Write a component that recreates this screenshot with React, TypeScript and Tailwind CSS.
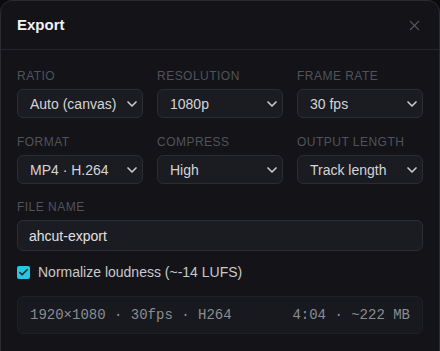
import { ChevronDown, X, Check } from 'lucide-react';

function Field({ label, value }: { label: string; value: string }) {
  return (
    <div className="flex flex-col">
      <span className="text-[12px] leading-4 tracking-[0.04em] uppercase text-[#50535b] mb-[5px]">{label}</span>
      <div className="h-[29px] flex items-center justify-between pl-[12px] pr-[2px] rounded-[6px] border border-[#2c2d33] bg-[#1b1c21] text-sm text-[#d4d4d8]">
        <span className="whitespace-nowrap">{value}</span>
        <ChevronDown size={16} strokeWidth={2.5} className="text-[#c8c8cc]" />
      </div>
    </div>
  );
}

function App() {
  const rows = [
    [
      { label: 'Ratio', value: 'Auto (canvas)' },
      { label: 'Resolution', value: '1080p' },
      { label: 'Frame rate', value: '30 fps' }
    ],
    [
      { label: 'Format', value: 'MP4 · H.264' },
      { label: 'Compress', value: 'High' },
      { label: 'Output length', value: 'Track length' }
    ]
  ];

  return (
    <div className="w-[440px] h-[351px] overflow-hidden bg-[#0b0b0d] font-['Liberation_Sans',Arial,sans-serif]">
      <div className="w-[440px] rounded-t-[12px] border border-[#2a2b31] bg-[#131318] pb-[40px]">
        <header className="h-[49px] flex items-center justify-between pl-[16px] pr-[16px] border-b border-[#26272d]">
          <h1 className="text-[15px] font-bold text-[#f2f2f4]">Export</h1>
          <X size={17} strokeWidth={1.5} className="text-[#55575f]" />
        </header>

        <div className="px-[16px] pt-[18px] flex flex-col">
          <div className="flex flex-col gap-[16px]">
            {rows.map((row, i) => (
              <div key={i} className="grid grid-cols-3 gap-[14px]">
                {row.map(f => (
                  <Field key={f.label} label={f.label} value={f.value} />
                ))}
              </div>
            ))}
          </div>

          <div className="flex flex-col mt-[15px]">
            <span className="text-[12px] leading-4 tracking-[0.04em] uppercase text-[#50535b] mb-[5px]">File name</span>
            <div className="h-[31px] flex items-center px-[11px] rounded-[6px] border border-[#2c2d33] bg-[#1b1c21] text-sm text-[#e0e0e4]">
              ahcut-export
            </div>
          </div>

          <label className="mt-[11px] h-[20px] flex items-center gap-[8px] text-sm text-[#c9c9ce]">
            <span className="w-[13px] h-[13px] rounded-[2px] bg-[#27c6e6] flex items-center justify-center">
              <Check size={11} strokeWidth={3.5} className="text-[#0d2a33]" />
            </span>
            Normalize loudness (~-14 LUFS)
          </label>

          <div className="mt-[14px] h-[38px] flex items-center justify-between px-[12px] rounded-[6px] border border-[#1f2025] bg-[#18191e] font-['Liberation_Mono',monospace] text-[14px] text-[#8a8c93]">
            <span>1920×1080 · 30fps · H264</span>
            <span>4:04 · ~222 MB</span>
          </div>
        </div>
      </div>
    </div>
  );
}

export default App;
